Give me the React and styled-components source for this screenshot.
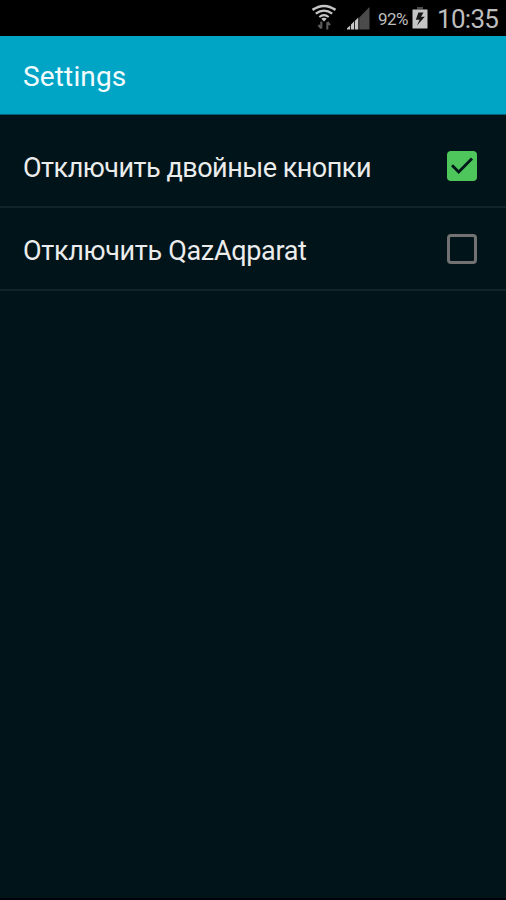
import React, { useState } from 'react';
import styled, { createGlobalStyle } from "styled-components";

const GlobalStyle = createGlobalStyle`
  * {
    box-sizing: border-box;
  }
  body {
    margin: 0;
    background: #00141a;
    font-family: Roboto, "Noto Sans", sans-serif;
  }
`;

const Screen = styled.div`
  width: 506px;
  height: 900px;
  display: flex;
  flex-direction: column;
  background: #00141a;
  border-bottom: 2px solid #00020a;
  overflow: hidden;
`;

const StatusBar = styled.div`
  height: 36px;
  flex: none;
  display: flex;
  align-items: flex-start;
  justify-content: flex-end;
  padding-right: 8px;
  background: #000;
  color: #bdbdbd;
`;

const StatusIcon = styled.svg`
  display: block;
  flex: none;
  margin-right: ${(props) => props.$gap}px;
`;

const Percent = styled.span`
  width: 31px;
  margin-right: 3px;
  font-size: 17px;
  line-height: 38px;
  letter-spacing: -0.6px;
  white-space: nowrap;
`;

const Clock = styled.span`
  width: 61px;
  font-size: 26px;
  line-height: 39px;
  letter-spacing: -0.7px;
  white-space: nowrap;
`;

const Header = styled.header`
  height: 79px;
  flex: none;
  display: flex;
  align-items: center;
  padding: 3px 23px 0;
  background: #00a5c6;
  border-bottom: 1px solid #006378;
`;

const Title = styled.h1`
  margin: 0;
  font-size: 28px;
  font-weight: 400;
  letter-spacing: 0.15px;
  color: #f4fcfe;
`;

const List = styled.div`
  padding-top: 10px;
`;

const Row = styled.div`
  height: 83px;
  display: flex;
  align-items: center;
  justify-content: space-between;
  padding: 2px 29px 0 23px;
  border-bottom: 2px solid #10242a;
  cursor: pointer;
`;

const Label = styled.span`
  padding-top: 2px;
  font-size: 27px;
  letter-spacing: ${(props) => props.$spacing}px;
  color: #ececec;
  white-space: nowrap;
`;

const Box = styled.span`
  width: 30px;
  height: 30px;
  margin-bottom: 1px;
  display: flex;
  align-items: center;
  justify-content: center;
  border-radius: 4px;
  border: ${(props) => (props.$checked ? "none" : "3px solid #727272")};
  background: ${(props) => (props.$checked ? "#4fc65c" : "transparent")};
`;

function WifiIcon() {
  return (
    <StatusIcon $gap={10} width="26" height="36" viewBox="0 0 26 36" fill="none" stroke="#c6c6c6">
      <path d="M1.5 9.9Q13 1.9 24.5 9.9" strokeWidth="2.5" />
      <path d="M4.8 13.6Q13 7.6 21.2 13.6" strokeWidth="2.3" />
      <path d="M8.3 17Q13 13.4 17.7 17" strokeWidth="2.1" />
      <path d="M10.3 18.8Q13 16.6 15.7 18.8L13 21.5Z" fill="#c6c6c6" stroke="none" />
      <path d="M10.3 21.5V28.5M7.4 25L10.2 28.4M16.3 29.5V22.2M19 25.2L16.4 22" stroke="#5c5c5c" strokeWidth="2.1" />
    </StatusIcon>
  );
}

function SignalIcon() {
  return (
    <StatusIcon $gap={8} width="23" height="36" viewBox="0 0 23 36">
      <path d="M12.2 17.5L22.5 7V29.5H12.2Z" fill="#4b4b4b" />
      <path d="M0 29.5V28.2L3.2 25.4V29.5ZM4 29.5V24.5L7 21.5V29.5ZM7.8 29.5V20.9L11.3 17.6V29.5Z" fill="#c6c6c6" />
    </StatusIcon>
  );
}

function BatteryIcon() {
  return (
    <StatusIcon $gap={9} width="16" height="36" viewBox="0 0 16 36">
      <path d="M5 7H11V9.5H5Z" fill="#4b4b4b" />
      <path d="M0.5 9.5H15.5V28.5H0.5Z" fill="#c6c6c6" />
      <path d="M6.4 12.5H11.5L9 16.8H12.8L5 25.5L7.6 19.8H3.8Z" fill="#161616" />
    </StatusIcon>
  );
}

function CheckBox(props) {
  return (
    <Box $checked={props.checked} role="checkbox" aria-checked={props.checked}>
      {props.checked && (
        <svg width="30" height="30" viewBox="0 0 30 30" fill="none">
          <path d="M5 14.3L11.7 21L25 7.4" stroke="#00181b" strokeWidth="2.8" />
        </svg>
      )}
    </Box>
  );
}

const options = [
  { id: "buttons", label: "Отключить двойные кнопки", spacing: -0.5 },
  { id: "qazaqparat", label: "Отключить QazAqparat", spacing: -0.32 },
];

function App() {
  const [values, setValues] = useState({ buttons: true, qazaqparat: false });

  const toggle = (id) => setValues({ ...values, [id]: !values[id] });

  return (
    <Screen>
      <GlobalStyle />
      <StatusBar>
        <WifiIcon />
        <SignalIcon />
        <Percent>92%</Percent>
        <BatteryIcon />
        <Clock>10:35</Clock>
      </StatusBar>
      <Header>
        <Title>Settings</Title>
      </Header>
      <List>
        {options.map((option) => (
          <Row key={option.id} onClick={() => toggle(option.id)}>
            <Label $spacing={option.spacing}>{option.label}</Label>
            <CheckBox checked={values[option.id]} />
          </Row>
        ))}
      </List>
    </Screen>
  );
}

export default App;
